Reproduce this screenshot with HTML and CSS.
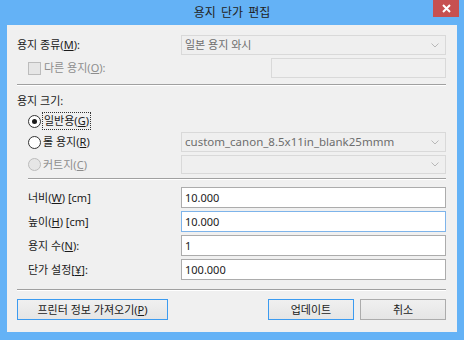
FILE: index.html
```html
<!DOCTYPE html>
<html lang="ko">
  <head>
    <meta charset="UTF-8" />
    <title>용지 단가 편집</title>
    <link rel="stylesheet" href="styles.css">
  </head>
  <body>
    <div class="window">
      <div class="titlebar">
        <span class="title">용지 단가 편집</span>
        <span class="close">
          <svg width="9" height="9" viewBox="0 0 9 9"><path d="M1 1L8 8M8 1L1 8" stroke="#fff" stroke-width="2"/></svg>
        </span>
      </div>

      <div class="client">
        <div class="row">
          <span class="label">용지 종류(<u>M</u>):</span>
          <div class="combo">
            <span>일본 용지 와시</span>
            <svg class="arrow" width="8" height="5" viewBox="0 0 8 5"><path d="M0.5 0.5L4 4L7.5 0.5" fill="none" stroke="#b8b8b8"/></svg>
          </div>
        </div>
        <div class="row row-check">
          <span class="label indent disabled"><span class="checkbox"></span>다른 용지(<u>O</u>):</span>
          <div class="textbox small disabled-box"></div>
        </div>

        <div class="sep"></div>

        <div class="group-title">용지 크기:</div>
        <div class="row row-radio1">
          <span class="label indent"><span class="radio checked"></span><span class="focus">일반용(<u>G</u>)</span></span>
        </div>
        <div class="row row-radio2">
          <span class="label indent"><span class="radio"></span>롤 용지(<u>R</u>)</span>
          <div class="combo latin">
            <span>custom_canon_8.5x11in_blank25mmm</span>
            <svg class="arrow" width="8" height="5" viewBox="0 0 8 5"><path d="M0.5 0.5L4 4L7.5 0.5" fill="none" stroke="#b8b8b8"/></svg>
          </div>
        </div>
        <div class="row row-radio3">
          <span class="label indent disabled"><span class="radio off"></span>커트지(<u>C</u>)</span>
          <div class="combo">
            <span></span>
            <svg class="arrow" width="8" height="5" viewBox="0 0 8 5"><path d="M0.5 0.5L4 4L7.5 0.5" fill="none" stroke="#b8b8b8"/></svg>
          </div>
        </div>

        <div class="sep sep-inner"></div>

        <div class="fields">
          <div class="row field">
            <span class="label indent">너비(<u>W</u>) [cm]</span>
            <div class="textbox">10.000</div>
          </div>
          <div class="row field">
            <span class="label indent">높이(<u>H</u>) [cm]</span>
            <div class="textbox focused">10.000</div>
          </div>
          <div class="row field">
            <span class="label indent">용지 수(<u>N</u>):</span>
            <div class="textbox">1</div>
          </div>
          <div class="row field">
            <span class="label indent">단가 설정[<u>¥</u>]:</span>
            <div class="textbox">100.000</div>
          </div>
        </div>

        <div class="sep sep-bottom"></div>

        <div class="buttons">
          <div class="button default wide">프린터 정보 가져오기(<u>P</u>)</div>
          <div class="spacer"></div>
          <div class="button default">업데이트</div>
          <div class="button">취소</div>
        </div>
      </div>
    </div>
  </body>
</html>
```

FILE: styles.css
```css
body {
  margin: 0;
  font-family: "Noto Sans", "Noto Sans CJK KR", sans-serif;
  font-size: 11px;
  color: #1a1a1a;
}
.window {
  width: 464px;
  height: 340px;
  box-sizing: border-box;
  background-color: #64b2f6;
  padding: 0 7px 8px 7px;
  display: flex;
  flex-direction: column;
}
.titlebar {
  position: relative;
  height: 25px;
  display: flex;
  align-items: center;
  justify-content: center;
}
.title {
  font-size: 12px;
  line-height: 16px;
  color: #222;
  word-spacing: 2px;
}
.close {
  position: absolute;
  top: 0;
  right: -2px;
  width: 26px;
  height: 17px;
  background-color: #c75050;
  display: flex;
  align-items: center;
  justify-content: center;
}
.client {
  flex: 1;
  background-color: #f0f0f0;
  padding: 10px 11px 0 10px;
  display: flex;
  flex-direction: column;
}
.row {
  display: flex;
  align-items: center;
  height: 20px;
}
.label {
  flex: 1;
  display: flex;
  align-items: center;
  line-height: 16px;
  white-space: nowrap;
}
.indent {
  padding-left: 11px;
}
.disabled {
  color: #8d8d8d;
}
.combo {
  width: 265px;
  height: 20px;
  box-sizing: border-box;
  border: 1px solid #d9d9d9;
  background-color: #efefef;
  color: #6d6d6d;
  display: flex;
  align-items: center;
  justify-content: space-between;
  padding: 0 6px 0 3px;
  line-height: 16px;
}
.combo.latin {
  font-size: 11.5px;
}
.textbox {
  width: 265px;
  height: 21px;
  box-sizing: border-box;
  border: 1px solid #acacac;
  background-color: #fff;
  padding: 0 3px;
  line-height: 19px;
}
.textbox.focused {
  border-color: #7eb4ea;
}
.textbox.small {
  width: 175px;
  height: 20px;
}
.disabled-box {
  border-color: #d9d9d9;
  background-color: #f0f0f0;
}
.row-check {
  margin-top: 3px;
}
.checkbox {
  width: 11px;
  height: 11px;
  border: 1px solid #bcbcbc;
  background-color: #e6e6e6;
  margin-right: 3px;
}
.sep {
  height: 1px;
  border-top: 1px solid #a0a0a0;
  background-color: #fff;
  margin-top: 6px;
}
.sep-inner {
  margin-left: 11px;
  margin-top: 4px;
}
.sep-bottom {
  margin-top: 9px;
}
.group-title {
  margin-top: 7px;
  line-height: 16px;
}
.row-radio1 {
  margin-top: 2px;
}
.row-radio2 {
  margin-top: 1px;
}
.row-radio3 {
  margin-top: 3px;
  height: 19px;
}
.row-radio3 .combo {
  height: 19px;
}
.radio {
  width: 11px;
  height: 11px;
  border: 1px solid #333;
  border-radius: 50%;
  background-color: #fff;
  margin-right: 2px;
  display: flex;
  align-items: center;
  justify-content: center;
}
.radio.checked::after {
  content: "";
  width: 5px;
  height: 5px;
  border-radius: 50%;
  background-color: #1a1a1a;
}
.radio.off {
  border-color: #bcbcbc;
  background-color: #e6e6e6;
}
.focus {
  outline: 1px dotted #333;
  padding: 0 1px;
}
.fields {
  margin-top: 7px;
  display: flex;
  flex-direction: column;
  gap: 3px;
}
.field {
  height: 21px;
}
.buttons {
  margin-top: 8px;
  display: flex;
  gap: 6px;
}
.spacer {
  flex: 1;
}
.button {
  width: 86px;
  height: 21px;
  box-sizing: border-box;
  border: 1px solid #acacac;
  background: linear-gradient(#f0f0f0, #e5e5e5);
  display: flex;
  align-items: center;
  justify-content: center;
  line-height: 16px;
}
.button.default {
  border-color: #3c9bf0;
}
.button.wide {
  width: 151px;
}
```
